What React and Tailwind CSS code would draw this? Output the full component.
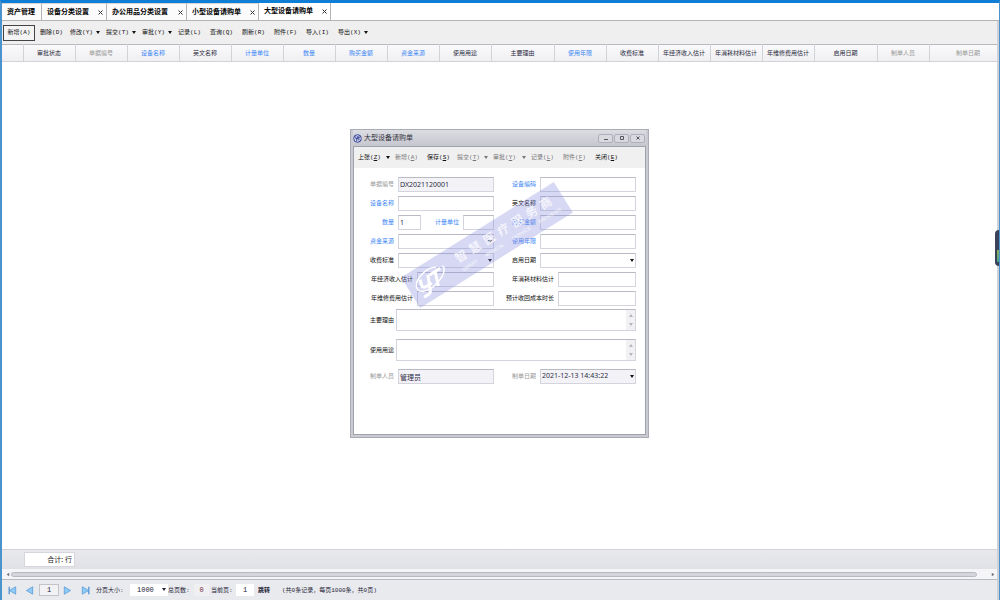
import { useState } from "react";

const tabs = [
  { name: "资产管理", width: "w-10" },
  { name: "设备分类设置", width: "w-[65px]", closable: true },
  { name: "办公用品分类设置", width: "w-[80px]", closable: true },
  { name: "小型设备请购单", width: "w-[72px]", closable: true },
  { name: "大型设备请购单", width: "w-[72px]", closable: true },
];

const actions = [
  { name: "新增", hotkey: "A", width: "w-8" },
  { name: "删除", hotkey: "D", width: "w-[30px]" },
  { name: "修改", hotkey: "Y", width: "w-9", menu: true },
  { name: "提交", hotkey: "T", width: "w-9", menu: true },
  { name: "审批", hotkey: "Y", width: "w-9", menu: true },
  { name: "记录", hotkey: "L", width: "w-8" },
  { name: "查询", hotkey: "Q", width: "w-8" },
  { name: "刷新", hotkey: "R", width: "w-8" },
  { name: "附件", hotkey: "F", width: "w-8" },
  { name: "导入", hotkey: "I", width: "w-8" },
  { name: "导出", hotkey: "X", width: "w-9", menu: true },
];

const dialogActions = [
  { name: "上张", hotkey: "Z", width: "w-[37px]", menu: true },
  { name: "新增", hotkey: "A", width: "w-8", disabled: true },
  { name: "保存", hotkey: "S", width: "w-[30px]" },
  { name: "提交", hotkey: "T", width: "w-9", menu: true, disabled: true },
  { name: "审批", hotkey: "Y", width: "w-[38px]", menu: true, disabled: true },
  { name: "记录", hotkey: "L", width: "w-8", disabled: true },
  { name: "附件", hotkey: "F", width: "w-8", disabled: true },
  { name: "关闭", hotkey: "E", width: "w-8" },
];

const BLUE = "text-[#3b86f5]";
const GRAY = "text-[#999999]";
const DARK = "text-[#2b2b40]";

const columns = [
  { name: "", width: "w-[21px]", color: DARK },
  { name: "审批状态", width: "w-[52px]", color: DARK },
  { name: "单据编号", width: "w-[52px]", color: GRAY },
  { name: "设备名称", width: "w-[52px]", color: BLUE },
  { name: "英文名称", width: "w-[52px]", color: DARK },
  { name: "计量单位", width: "w-[52px]", color: BLUE },
  { name: "数量", width: "w-[52px]", color: BLUE },
  { name: "购买金额", width: "w-[52px]", color: BLUE },
  { name: "资金来源", width: "w-[52px]", color: BLUE },
  { name: "使用用途", width: "w-[52px]", color: DARK },
  { name: "主要理由", width: "w-[63px]", color: DARK },
  { name: "使用年限", width: "w-[52px]", color: BLUE },
  { name: "收费标准", width: "w-[52px]", color: DARK },
  { name: "年经济收入估计", width: "w-[52px]", color: DARK },
  { name: "年消耗材料估计", width: "w-[52px]", color: DARK },
  { name: "年维修费用估计", width: "w-[52px]", color: DARK },
  { name: "启用日期", width: "w-[63px]", color: DARK },
  { name: "制单人员", width: "w-[52px]", color: GRAY },
  { name: "制单日期", width: "w-[78px]", color: GRAY },
];

function Caret({ className = "" }) {
  return (
    <svg viewBox="0 0 4 3" className={`w-1 h-[3px] shrink-0 ${className}`} fill="currentColor">
      <path d="M0 0h4L2 3z" />
    </svg>
  );
}

function ActionButton({ action, underline, boxed }) {
  return (
    <button
      type="button"
      disabled={action.disabled}
      className={`h-4 shrink-0 flex items-center whitespace-nowrap text-[6px] ${action.width} ${
        boxed ? "justify-center border border-[#444] bg-[#f4f4f4]" : underline ? "pl-1" : "pl-[5px]"
      } ${action.disabled ? "text-[#777]" : "text-[#111]"}`}
    >
      <span>
        {action.name}({underline ? <u>{action.hotkey}</u> : action.hotkey})
      </span>
      {action.menu && <Caret className="ml-auto mr-px" />}
    </button>
  );
}

const box = "h-[15px] w-full min-w-0 border border-[#d3d4dd] border-t-[#b9bac4] text-[7px] text-[#2b2b45] pl-px outline-none";

function Field({ id, label, color = "text-[#111]", labelWidth = "w-8", value = "", readOnly, type, className = "" }) {
  return (
    <div className={`flex items-center gap-1 min-w-0 ${className}`}>
      <label htmlFor={id} className={`shrink-0 text-right whitespace-nowrap text-[6px] ${labelWidth} ${color}`}>
        {label}
      </label>
      {type === "select" ? (
        <div className="relative flex-1 min-w-0 flex">
          <select
            id={id}
            defaultValue={value}
            className={`${box} appearance-none rounded-none ${readOnly ? "bg-[#f3f3f7]" : "bg-white"}`}
          >
            <option value={value}>{value}</option>
          </select>
          <Caret className="absolute right-0.5 top-1.5 pointer-events-none text-[#111]" />
        </div>
      ) : (
        <input
          id={id}
          defaultValue={value}
          readOnly={readOnly}
          className={`${box} flex-1 ${readOnly ? "bg-[#f3f3f7]" : "bg-white"}`}
        />
      )}
    </div>
  );
}

function LongField({ id, label }) {
  return (
    <div className="flex items-center gap-0.5">
      <label htmlFor={id} className="w-8 shrink-0 text-right whitespace-nowrap text-[6px] text-[#111]">
        {label}
      </label>
      <div className="flex-1 flex h-[22px] border border-[#d3d4dd] border-t-[#b9bac4]">
        <textarea id={id} className="flex-1 min-w-0 resize-none outline-none text-[7px]" />
        <div className="w-[9px] bg-[#f1f1f4] flex flex-col items-center justify-between py-1 text-[#b5b5bd]">
          <Caret className="rotate-180" />
          <Caret />
        </div>
      </div>
    </div>
  );
}

function Watermark() {
  return (
    <div className="absolute left-[46px] top-[97px] w-[180px] h-9 -rotate-32 bg-[#8b8fdc]/35 text-white/80 pointer-events-none flex items-center">
      <svg viewBox="0 0 40 32" className="w-10 h-8 ml-1 shrink-0" fill="none" stroke="#fff">
        <path d="M31 8C24 3 8 6 4 14c-3 7 8 11 19 8s16-8 14-12" strokeWidth="1.5" />
        <path d="M11 10l-2 6q0 3 4 3h6M20 10l-6 14q-1 3-4 3H5" strokeWidth="3" />
        <path d="M21 11h13M28 11l-5 14" strokeWidth="3" />
      </svg>
      <div className="ml-3 flex-1 pr-2">
        <div className="flex justify-between font-medium text-[12px] leading-4 pr-1">
          {"智慧医疗服务商".split("").map((c) => (
            <span key={c}>{c}</span>
          ))}
        </div>
        <div className="flex justify-between text-[5px] leading-2 font-['Liberation_Sans',sans-serif]">
          <span>SMART</span>
          <span>MEDICAL</span>
          <span>SERVICE</span>
          <span>PROVIDER</span>
        </div>
      </div>
    </div>
  );
}

function WindowButton({ label, children }) {
  return (
    <button
      type="button"
      aria-label={label}
      className="w-[15px] h-[9px] border border-[#aeb0b9] rounded-[2px] bg-[#d9dae0] flex items-center justify-center"
    >
      <svg viewBox="0 0 6 5" className="w-1.5 h-[5px]" fill="none" stroke="#55555f">
        {children}
      </svg>
    </button>
  );
}

function RequestDialog() {
  return (
    <div
      role="dialog"
      aria-label="大型设备请购单"
      className="absolute left-[348px] top-[126px] w-[299px] border border-[#a9abb5] bg-[#c9cad2] px-0.5 pb-0.5"
    >
      <div className="h-4 flex items-center gap-0.5 pr-px bg-linear-to-b from-[#dcdde2] to-[#c6c7cf]">
        <svg viewBox="0 0 9 9" className="w-[9px] h-[9px]" fill="none" stroke="#2d3c94">
          <circle cx="4.5" cy="4.5" r="3.8" fill="#e4e6f4" />
          <path d="M2.8 2.3v2.4h1.9V2.3M3.8 4.7v2.4M4.7 3h2.2M5.9 3v3.6" />
        </svg>
        <span className="flex-1 text-[7px] text-[#333340]">大型设备请购单</span>
        <div className="flex gap-px">
          <WindowButton label="最小化">
            <path d="M1 3.5h4" />
          </WindowButton>
          <WindowButton label="最大化">
            <path d="M1.5 .5h3v3h-3z" />
          </WindowButton>
          <WindowButton label="关闭">
            <path d="M1.5 .5l3 3M4.5 .5l-3 3" />
          </WindowButton>
        </div>
      </div>
      <div className="border border-[#9fa1ab] bg-white">
        <div className="h-[21px] flex items-center bg-[#f0f0f0] font-['Liberation_Mono','Noto_Sans_CJK_SC',monospace]">
          {dialogActions.map((action) => (
            <ActionButton key={action.name} action={action} underline />
          ))}
        </div>
        <form className="pt-[9px] pb-[50px] pl-2 pr-[9px]">
          <div className="grid grid-cols-[132px_minmax(0,1fr)] gap-x-[5px] gap-y-1">
            <Field id="billNo" label="单据编号" color={GRAY} value="DX2021120001" readOnly />
            <Field id="code" label="设备编码" color={BLUE} labelWidth="w-[37px]" />
            <Field id="name" label="设备名称" color={BLUE} />
            <Field id="enName" label="英文名称" labelWidth="w-[37px]" />
            <div className="flex">
              <Field id="count" label="数量" color={BLUE} value="1" className="w-[59px]" />
              <Field id="unit" label="计量单位" color={BLUE} labelWidth="w-[38px]" className="flex-1" />
            </div>
            <Field id="amount" label="购买金额" color={BLUE} labelWidth="w-[37px]" />
            <Field id="fund" label="资金来源" color={BLUE} type="select" />
            <Field id="years" label="使用年限" color={BLUE} labelWidth="w-[37px]" />
            <Field id="charge" label="收费标准" type="select" />
            <Field id="startDate" label="启用日期" labelWidth="w-[37px]" type="select" />
            <Field id="income" label="年经济收入估计" labelWidth="w-[51px]" />
            <Field id="material" label="年消耗材料估计" labelWidth="w-[55px]" />
            <Field id="repair" label="年维修费用估计" labelWidth="w-[51px]" />
            <Field id="payback" label="预计收回成本时长" labelWidth="w-[55px]" />
          </div>
          <div className="mt-[3px] flex flex-col gap-2">
            <LongField id="reason" label="主要理由" />
            <LongField id="usage" label="使用用途" />
          </div>
          <div className="mt-2 grid grid-cols-[132px_minmax(0,1fr)] gap-x-[5px]">
            <Field id="creator" label="制单人员" color={GRAY} value="管理员" readOnly />
            <Field id="createDate" label="制单日期" color={GRAY} labelWidth="w-[37px]" value="2021-12-13 14:43:22" type="select" readOnly />
          </div>
        </form>
      </div>
      <Watermark />
    </div>
  );
}

function PageButton({ label, flip, end }) {
  return (
    <button type="button" aria-label={label} className="w-[9px] h-[9px] shrink-0">
      <svg viewBox="0 0 9 9" className={`w-[9px] h-[9px] ${flip ? "-scale-x-100" : ""}`} fill="#8fcbf5" stroke="#5b9bd8" strokeWidth=".8">
        <path d="M1.3 .8v7.4L7.6 4.5z" />
        {end && <path d="M7.8 .8v7.4" strokeWidth="1.4" />}
      </svg>
    </button>
  );
}

function Pager() {
  return (
    <div className="h-[21px] shrink-0 flex items-center bg-[#e9eaee] border-t border-[#b9bac0] pl-1.5 whitespace-nowrap text-[6px] text-[#222235] font-['Liberation_Mono','Noto_Sans_CJK_SC',monospace]">
      <PageButton label="首页" flip end />
      <div className="w-2" />
      <PageButton label="上一页" flip />
      <input aria-label="页码" defaultValue="1" className="ml-[5px] w-5 h-3 border border-[#c3c4ca] bg-[#f2f2f5] text-center text-[7px]" />
      <div className="w-1" />
      <PageButton label="下一页" />
      <div className="w-[9px]" />
      <PageButton label="尾页" end />
      <label htmlFor="pageSize" className="ml-1.5 w-[34px]">分页大小:</label>
      <div className="relative flex">
        <select id="pageSize" className="w-[38px] h-3 appearance-none bg-white pl-[7px] text-[7px]">
          <option>1000</option>
        </select>
        <Caret className="absolute right-0.5 top-1 pointer-events-none" />
      </div>
      <span className="w-[26px]">总页数:</span>
      <span className="w-[15px] h-3 bg-[#f0f0f2] text-center text-[7px] leading-3 text-[#702a3a]">0</span>
      <label htmlFor="currentPage" className="ml-0.5 w-[25px]">当前页:</label>
      <input id="currentPage" defaultValue="1" className="w-[18px] h-3 bg-white text-center text-[7px]" />
      <button type="button" className="ml-1 font-bold">跳转</button>
      <span className="ml-3">(共0条记录，每页1000条，共0页)</span>
    </div>
  );
}

export default function App() {
  const [active, setActive] = useState("大型设备请购单");

  return (
    <div className="relative h-screen overflow-hidden flex flex-col bg-white border-t-[3px] border-t-[#0f7fd6] border-l-2 border-l-[#4b93cd] border-r border-r-[#4b93cd] font-['Noto_Sans','Noto_Sans_CJK_SC',sans-serif]">
      <nav className="h-[18px] shrink-0 flex border-b border-[#b4b4b4]">
        {tabs.map((tab) => (
          <div
            key={tab.name}
            className={`flex items-center justify-between pl-[5px] pr-[3px] border-r border-[#b4b4b4] whitespace-nowrap ${tab.width} ${
              active === tab.name ? "bg-white" : "border-t border-t-[#d5d5d5] bg-[#fbfbfb]"
            }`}
          >
            <button type="button" onClick={() => setActive(tab.name)} className="text-[7px] font-bold text-black">
              {tab.name}
            </button>
            {tab.closable && (
              <button type="button" aria-label="关闭标签" className="w-[5px] h-[5px]">
                <svg viewBox="0 0 5 5" className="w-[5px] h-[5px]" stroke="#333">
                  <path d="M.5 .5l4 4M4.5 .5l-4 4" />
                </svg>
              </button>
            )}
          </div>
        ))}
      </nav>

      <div className="flex-1 min-h-0 flex flex-col border-r-2 border-[#d0d1d6]">
        <div className="h-[23px] shrink-0 flex items-center bg-[#efefef] pl-px font-['Liberation_Mono','Noto_Sans_CJK_SC',monospace]">
          {actions.map((action, index) => (
            <ActionButton key={action.name} action={action} boxed={index === 0} />
          ))}
        </div>

        <div className="flex-1 min-h-0 overflow-hidden">
          <table className="w-[1005px] table-fixed border-collapse">
            <thead>
              <tr className="h-[17px] bg-linear-to-b from-[#fafafb] to-[#efeff3]">
                {columns.map((col) => (
                  <th
                    key={col.name}
                    className={`border-r border-y border-[#d2d2d9] border-t-[#b8b8c0] whitespace-nowrap text-center text-[6px] leading-2 font-normal p-0 ${col.width} ${col.color}`}
                  >
                    {col.name}
                  </th>
                ))}
              </tr>
            </thead>
          </table>
        </div>

        <div className="h-5 shrink-0 flex items-center border-t border-[#d2d2d8] bg-linear-to-b from-[#e9e9ed] to-[#e0e1e6]">
          <div className="ml-[22px] w-[51px] h-[15px] border border-[#d6d6dc] bg-white pr-0.5 text-right text-[7px] leading-[14px] text-[#222]">
            合计: 行
          </div>
        </div>
        <div className="h-2.5 shrink-0 flex items-center bg-[#f5f5f7] pl-1 pr-0.5 text-[#777785]">
          <Caret className="rotate-90" />
          <div className="ml-px mr-3.5 flex-1 h-[5px] rounded-full border border-[#b7b8c2] bg-[#d5d6dd]" />
          <Caret className="-rotate-90" />
        </div>
        <Pager />
      </div>

      <RequestDialog />

      <div className="absolute -right-px top-[227px] w-[5px] h-9 rounded-l-sm bg-[#3a4258] flex items-end justify-end pb-1">
        <div className="w-[3px] h-3 bg-linear-to-b from-[#8fae56] to-[#3fa58c]" />
      </div>
    </div>
  );
}
